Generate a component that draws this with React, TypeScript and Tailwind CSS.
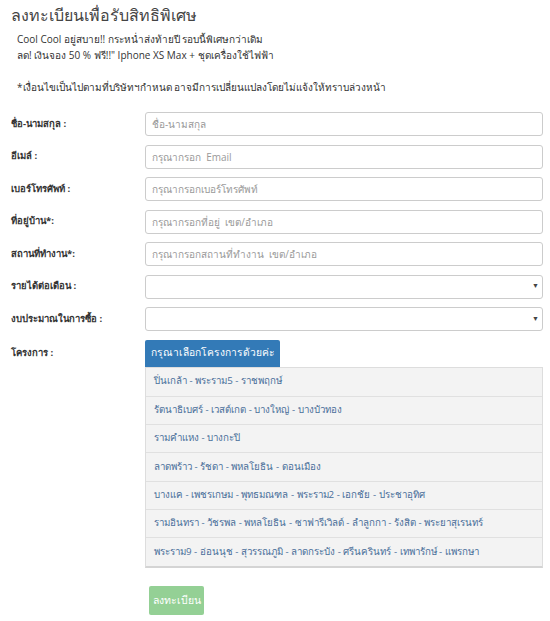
import React from "react";

const fields = [
    { label: "ชื่อ-นามสกุล :", placeholder: "ชื่อ-นามสกุล" },
    { label: "อีเมล์ :", placeholder: "กรุณากรอก  Email" },
    { label: "เบอร์โทรศัพท์ :", placeholder: "กรุณากรอกเบอร์โทรศัพท์" },
    { label: "ที่อยู่บ้าน*:", placeholder: "กรุณากรอกที่อยู่  เขต/อำเภอ" },
    { label: "สถานที่ทำงาน*:", placeholder: "กรุณากรอกสถานที่ทำงาน  เขต/อำเภอ" },
];

const selects = ["รายได้ต่อเดือน :", "งบประมาณในการซื้อ :"];

const projects = [
    "ปิ่นเกล้า - พระราม5 - ราชพฤกษ์",
    "รัตนาธิเบศร์ - เวสต์เกต - บางใหญ่ - บางบัวทอง",
    "รามคำแหง - บางกะปิ",
    "ลาดพร้าว - รัชดา - พหลโยธิน - ดอนเมือง",
    "บางแค - เพชรเกษม - พุทธมณฑล - พระราม2 - เอกชัย - ประชาอุทิศ",
    "รามอินทรา - วัชรพล - พหลโยธิน - ซาฟารีเวิลด์ - ลำลูกกา - รังสิต - พระยาสุเรนทร์",
    "พระราม9 - อ่อนนุช - สุวรรณภูมิ - ลาดกระบัง - ศรีนครินทร์ - เทพารักษ์ - แพรกษา",
];

export default function App() {
    return (
        <div className="w-[550px] h-[621px] bg-white text-[#333] font-['Open_Sans','Noto_Sans',sans-serif] overflow-hidden">
            {/* Header */}
            <div className="pl-[11px] pt-[3px]">
                <h1 className="text-[16px] leading-[24px] font-normal text-[#444]">ลงทะเบียนเพื่อรับสิทธิพิเศษ</h1>
                <div className="pl-[6px] text-[10px] leading-[16px] mt-[4px]">
                    <p>Cool Cool อยู่สบาย!! กระหน่ำส่งท้ายปี รอบนี้พิเศษกว่าเดิม</p>
                    <p>ลด! เงินจอง 50 % ฟรี!!" Iphone XS Max + ชุดเครื่องใช้ไฟฟ้า</p>
                    <p className="mt-[16px]">*เงื่อนไขเป็นไปตามที่บริษัทฯกำหนด อาจมีการเปลี่ยนแปลงโดยไม่แจ้งให้ทราบล่วงหน้า</p>
                </div>
            </div>

            {/* Form */}
            <div className="mt-[17px] flex flex-col gap-[8.5px]">
                {fields.map((f) => (
                    <div key={f.label} className="flex items-center">
                        <label className="w-[145px] pl-[11px] text-[9.5px] font-bold">{f.label}</label>
                        <input
                            readOnly
                            placeholder={f.placeholder}
                            className="w-[398px] h-[24px] border border-[#ccc] rounded-[3px] px-[6px] text-[10px] placeholder:text-[#999] outline-none"
                        />
                    </div>
                ))}
                {selects.map((s) => (
                    <div key={s} className="flex items-center">
                        <label className="w-[145px] pl-[11px] text-[9.5px] font-bold">{s}</label>
                        <div className="w-[398px] h-[24px] border border-[#ccc] rounded-[3px] flex items-center justify-end pr-[3px]">
                            <span className="text-[7px] text-[#444]">▼</span>
                        </div>
                    </div>
                ))}
                <div className="flex items-start">
                    <label className="w-[145px] pl-[11px] pt-[6px] text-[9.5px] font-bold">โครงการ :</label>
                    <div className="w-[398px]">
                        <div className="w-[135px] h-[27px] bg-[#337ab7] text-white text-[10.25px] flex items-center justify-center rounded-t-[2px]">
                            กรุณาเลือกโครงการด้วยค่ะ
                        </div>
                        <div className="border border-[#ddd] border-b-2 border-b-[#d4d4d4] bg-[#f3f3f3]">
                            {projects.map((p, i) => (
                                <div
                                    key={p}
                                    className={
                                        "h-[28.3px] flex items-center px-[8px] text-[9.75px] text-[#4a6f9a] " +
                                        (i > 0 ? "border-t border-[#e0e0e0]" : "")
                                    }
                                >
                                    {p}
                                </div>
                            ))}
                        </div>
                    </div>
                </div>
            </div>

            <div className="pl-[149px] mt-[18px]">
                <button className="w-[55px] h-[29px] bg-[#94d095] text-white text-[10.5px] rounded-[2px]">ลงทะเบียน</button>
            </div>
        </div>
    );
}
